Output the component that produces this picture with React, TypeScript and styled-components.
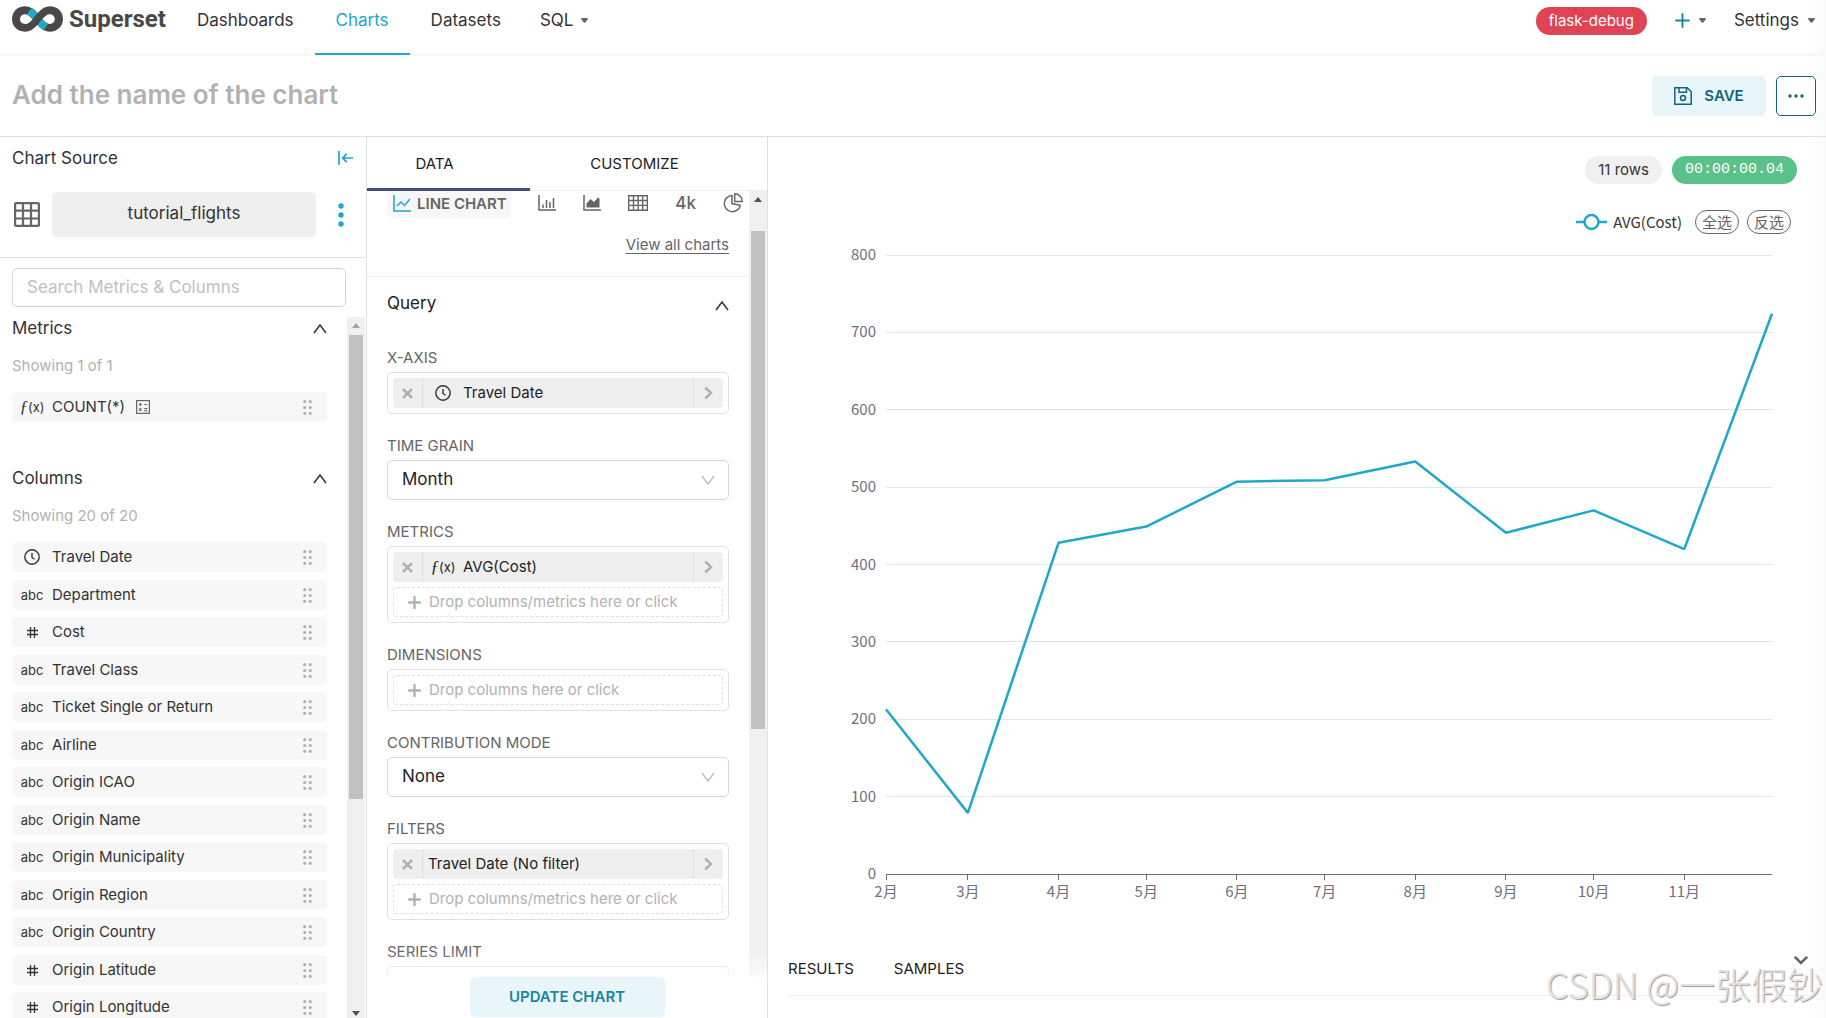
import React from 'react';
import styled, { createGlobalStyle } from 'styled-components';

const SANS = "Inter, 'Noto Sans CJK SC', 'Liberation Sans', sans-serif";
const CJK = "'Noto Sans CJK SC', 'Noto Sans', sans-serif";
const MONO = "'Liberation Mono', 'DejaVu Sans Mono', monospace";

const GlobalStyle = createGlobalStyle`
  *, *::before, *::after { box-sizing: border-box; }
  body { margin: 0; font-family: ${SANS}; font-size: 15px; line-height: 20px; color: #333; background: #fff; }
  button, input, select { font: inherit; color: inherit; margin: 0; }
  button { border: 0; padding: 0; background: none; cursor: pointer; }
  h1, h2, h3, p, ul { margin: 0; padding: 0; font-weight: 400; }
  ul { list-style: none; }
  a { color: inherit; text-decoration: none; }
  svg { display: block; flex: none; }
`;

const Page = styled.div`
  height: 100vh;
  display: flex;
  flex-direction: column;
  overflow: hidden;
  background: linear-gradient(to left, #f9f9f9, #fff 16px);
`;

/* ---------- top navigation ---------- */

const TopBar = styled.header`
  display: flex;
  justify-content: space-between;
  height: 56px;
  border-bottom: 2px solid #f7f7f7;
  font-size: 17px;
`;

const NavGroup = styled.nav`
  display: flex;
  align-items: flex-start;
`;

const Brand = styled.a`
  display: flex;
  align-items: center;
  gap: 6px;
  height: 38px;
  padding: 0 10px 0 12px;
  font-family: Roboto, ${SANS};
  font-size: 24px;
  font-weight: 700;
  color: #484848;
`;

const NavItem = styled.a<{ $active?: boolean; $menu?: boolean }>`
  display: flex;
  align-items: center;
  gap: 8px;
  height: 55px;
  padding: 0 21px 13px ${p => (p.$menu ? '18px' : '21px')};
  color: ${p => (p.$active ? '#20a7c9' : '#333')};
  border-bottom: 2px solid ${p => (p.$active ? '#20a7c9' : 'transparent')};
`;

const UserMenu = styled.div`
  display: flex;
  align-items: center;
  gap: 28px;
  height: 42px;
  padding-right: 11px;
`;

const MenuButton = styled.button`
  display: flex;
  align-items: center;
  gap: 9px;
  height: 28px;
  padding-bottom: 2px;
`;

const Pill = styled.span<{ $bg: string; $fg: string; $mono?: boolean }>`
  display: flex;
  align-items: center;
  height: 28px;
  padding: 0 13px;
  border-radius: 14px;
  background: ${p => p.$bg};
  color: ${p => p.$fg};
  font-family: ${p => (p.$mono ? MONO : SANS)};
  font-size: 15px;
`;

/* ---------- title row ---------- */

const TitleBar = styled.div`
  display: flex;
  align-items: center;
  gap: 10px;
  height: 81px;
  padding: 0 10px 0 12px;
  border-bottom: 1px solid #e0e0e0;
`;

const TitleInput = styled.input`
  flex: 1;
  min-width: 0;
  border: 0;
  padding: 0 0 2px;
  outline: 0;
  background: none;
  font-size: 26px;
  font-weight: 600;
  line-height: 32px;
  &::placeholder { color: #b2b2b2; opacity: 1; }
`;

const SoftButton = styled.button<{ $color: string; $wide?: boolean }>`
  display: flex;
  align-items: center;
  justify-content: center;
  gap: 12px;
  height: 40px;
  width: ${p => (p.$wide ? '195px' : '114px')};
  border-radius: 5px;
  background: #e9f6f9;
  color: ${p => p.$color};
  font-size: 15px;
  font-weight: 600;
`;

const MoreButton = styled.button`
  display: grid;
  place-items: center;
  width: 40px;
  height: 40px;
  border: 1px solid #156378;
  border-radius: 5px;
  color: #156378;
`;

/* ---------- workspace ---------- */

const Workspace = styled.div`
  flex: 1;
  min-height: 0;
  display: grid;
  grid-template-columns: 367px 401px minmax(0, 1fr);
`;

const SourcePanel = styled.aside`
  display: flex;
  flex-direction: column;
  min-height: 0;
  border-right: 1px solid #e0e0e0;
`;

const SourceHead = styled.div`
  display: flex;
  align-items: center;
  justify-content: space-between;
  padding: 9px 13px 0 12px;
  height: 32px;
`;

const SourceTitle = styled.h2`
  font-size: 17px;
`;

const DatasetRow = styled.div`
  display: flex;
  align-items: center;
  gap: 12px;
  margin-top: 23px;
  padding: 0 22px 20px 14px;
  border-bottom: 1px solid #e0e0e0;
`;

const DatasetButton = styled.button`
  width: 264px;
  height: 45px;
  margin-right: auto;
  padding-bottom: 3px;
  border-radius: 5px;
  background: #efefef;
  font-size: 17px;
`;

const SearchInput = styled.input`
  height: 39px;
  margin: 10px 20px 10px 12px;
  padding: 0 14px 2px;
  border: 1px solid #d3d3e0;
  border-radius: 5px;
  outline: 0;
  background: #fff;
  font-size: 17px;
  &::placeholder { color: #bfbfbf; opacity: 1; }
`;

const ScrollArea = styled.div`
  flex: 1;
  min-height: 0;
  display: flex;
`;

const SourceScroll = styled(ScrollArea)`
  padding-right: 1px;
`;

const SourceList = styled.div`
  flex: 1;
  min-width: 0;
  padding: 0 20px 0 12px;
  overflow: hidden;
`;

const Section = styled.section`
  margin-bottom: 45px;
`;

const SectionHead = styled.button`
  display: flex;
  align-items: center;
  justify-content: space-between;
  width: 100%;
  height: 22px;
  font-size: 17px;
`;

const Showing = styled.p`
  margin: 17px 0 16px;
  color: #b2b2b2;
`;

const FieldRow = styled.li`
  display: flex;
  align-items: center;
  height: 30px;
  padding: 0 15px 0 8px;
  border-radius: 5px;
  background: #f7f7f7;
  &:nth-child(odd) { margin-bottom: 8px; }
  &:nth-child(even) { margin-bottom: 7px; }
  &:last-child { margin-bottom: 0; }
`;

const TypeCell = styled.span`
  display: flex;
  justify-content: center;
  width: 24px;
  margin-right: 8px;
  font-size: 13px;
`;

const FieldName = styled.span`
  display: flex;
  flex: 1;
  align-items: center;
  gap: 11px;
`;

const Fx = styled.span`
  font-size: 13px;
  i { font-family: 'Liberation Serif', serif; font-size: 17px; }
`;

const Track = styled.div`
  display: flex;
  flex-direction: column;
  align-items: center;
  width: 18px;
  padding: 6px 2px 2px;
  background: #f0f0f0;
`;

const Thumb = styled.div<{ $share: number; $gap: number }>`
  width: 14px;
  height: ${p => p.$share}%;
  margin-top: ${p => p.$gap}px;
  margin-bottom: auto;
  background: #c1c1c1;
`;

/* ---------- control panel ---------- */

const ControlPanel = styled.section`
  display: flex;
  flex-direction: column;
  min-height: 0;
  border-right: 1px solid #e0e0e0;
`;

const Tabs = styled.div`
  display: flex;
  height: 54px;
  border-bottom: 1px solid #f0f0f0;
`;

const Tab = styled.button<{ $active?: boolean }>`
  flex: ${p => (p.$active ? '0 0 163px' : '1')};
  height: 54px;
  padding-top: 2px;
  padding-right: 28px;
  border-bottom: 3px solid ${p => (p.$active ? '#444e7c' : 'transparent')};
  color: #222;
`;

const Controls = styled.div`
  flex: 1;
  min-width: 0;
  overflow: hidden;
`;

const VizRow = styled.div`
  display: flex;
  align-items: flex-start;
  justify-content: space-between;
  padding: 0 6px 0 20px;
  color: #666;
`;

const VizChip = styled.button`
  display: flex;
  align-items: center;
  gap: 6px;
  height: 27px;
  width: 124px;
  padding: 0 6px 2px;
  border-radius: 0 0 5px 5px;
  background: #f7f7f7;
  font-size: 15px;
  font-weight: 600;
  white-space: nowrap;
`;

const VizButton = styled.button`
  display: grid;
  place-items: center;
  height: 24px;
  font-size: 17px;
  font-weight: 500;
`;

const ViewAll = styled.div`
  display: flex;
  justify-content: flex-end;
  padding: 17px 20px 21px;
  border-bottom: 1px solid #f0f0f0;
  color: #666;
  a { text-decoration: underline; text-underline-offset: 3px; }
`;

const QueryHead = styled.button`
  display: flex;
  align-items: center;
  justify-content: space-between;
  width: 100%;
  height: 56px;
  padding: 0 20px 4px;
  font-size: 17px;
  color: #222;
  > svg { margin-top: 5px; }
`;

const ControlList = styled.div`
  display: flex;
  flex-direction: column;
  gap: 23px;
  padding: 16px 20px 0;
`;

const Control = styled.div`
  display: flex;
  flex-direction: column;
  gap: 5px;
`;

const Caption = styled.label`
  line-height: 18px;
  color: #666;
`;

const SelectBox = styled.div`
  display: grid;
  align-items: center;
  > * { grid-area: 1 / 1; }
  > svg { justify-self: end; margin-right: 14px; pointer-events: none; }
`;

const Select = styled.select`
  appearance: none;
  width: 100%;
  height: 40px;
  padding: 0 14px 2px;
  border: 1px solid #d9d9d9;
  border-radius: 5px;
  outline: 0;
  background: #fff;
  font-size: 17px;
  color: #222;
`;

const DropBox = styled.div`
  display: flex;
  flex-direction: column;
  gap: 5px;
  padding: 5px;
  border: 1px solid #e0e0e0;
  border-radius: 5px;
`;

const Chip = styled.div`
  display: flex;
  align-items: stretch;
  height: 30px;
  border-radius: 4px;
  background: #efefef;
  color: #222;
`;

const ChipButton = styled.button<{ $side: 'left' | 'right' }>`
  display: grid;
  place-items: center;
  width: 30px;
  border-${p => (p.$side === 'left' ? 'right' : 'left')}: 1px solid #e0e0e0;
`;

const ChipLabel = styled.span<{ $icon?: boolean }>`
  display: flex;
  flex: 1;
  align-items: center;
  padding-left: ${p => (p.$icon ? '8px' : '5px')};
`;

const ChipIcon = styled.span`
  display: flex;
  justify-content: center;
  width: 24px;
  margin-right: 8px;
`;

const Ghost = styled.button`
  display: flex;
  align-items: center;
  gap: 8px;
  height: 30px;
  padding: 0 14px;
  border: 1px dashed #e0e0e0;
  border-radius: 4px;
  color: #b2b2b2;
`;

const UpdateBar = styled.div`
  display: flex;
  justify-content: center;
  align-items: flex-start;
  height: 67px;
  margin-top: -26px;
  padding-top: 26px;
  background: linear-gradient(rgba(255, 255, 255, 0), #fff 34px);
  z-index: 1;
`;

/* ---------- chart panel ---------- */

const ChartPanel = styled.main`
  display: flex;
  flex-direction: column;
  min-width: 0;
  overflow: hidden;
`;

const StatRow = styled.div`
  display: flex;
  justify-content: flex-end;
  gap: 10px;
  padding: 19px 29px 26px;
`;

const Legend = styled.div`
  display: flex;
  align-items: center;
  justify-content: flex-end;
  gap: 8px;
  height: 24px;
  padding-right: 35px;
  font-family: ${CJK};
  color: #333;
`;

const LegendItem = styled.button`
  display: flex;
  align-items: center;
  gap: 6px;
  margin-right: 5px;
`;

const LegendButton = styled.button`
  height: 24px;
  padding: 0 6px;
  border: 1px solid #666;
  border-radius: 12px;
  line-height: 20px;
  color: #666;
`;

const ChartSvg = styled.svg`
  width: 100%;
  height: auto;
  text { font-family: ${CJK}; font-size: 15px; fill: #6e7079; }
`;

const ResultsBar = styled.div`
  display: flex;
  align-items: center;
  gap: 40px;
  margin: 30px 18px 0 20px;
  height: 52px;
  padding-bottom: 2px;
  border-bottom: 1px solid #f0f0f0;
  color: #222;
  > :last-child { align-self: flex-start; margin: 12px 0 0 auto; }
`;

const Watermark = styled.span`
  position: absolute;
  right: 3px;
  bottom: 12px;
  font-family: ${CJK};
  font-size: 36px;
  font-weight: 300;
  line-height: 46px;
  color: #e2e2e2;
  text-shadow: 1px 1px 1px #999;
  pointer-events: none;
`;

/* ---------- icons ---------- */

const Caret = ({ color = '#666' }: { color?: string }) => (
  <svg width="7" height="5" viewBox="0 0 7 5" fill={color}>
    <path d="M1 0h5c.8 0 1.200.8.700 1.400L4.200 4.400a1 1 0 0 1-1.400 0L.3 1.400C-.2.8.2 0 1 0z" />
  </svg>
);

const ThinUp = () => (
  <svg width="14" height="11" viewBox="0 0 14 11" fill="none" stroke="#333" strokeWidth="1.5">
    <path d="M1 10L7 2l6 8" />
  </svg>
);

const ThinDown = () => (
  <svg width="14" height="11" viewBox="0 0 14 11" fill="none" stroke="#bfbfbf" strokeWidth="1.4">
    <path d="M1 1l6 8 6-8" />
  </svg>
);

const Logo = () => (
  <svg width="51" height="26" viewBox="17.700 15.200 75.500 37.500">
    <path
      fill="#484848"
      d="M73.790 15.230C67.320 15.230 61.360 18.870 55.600 25.230 49.940 18.770 43.880 15.230 37.110 15.230 25.900 15.230 17.720 23.230 17.720 34s8.180 18.670 19.390 18.670c6.890 0 12.230-3.230 18.190-9.670 5.760 6.460 11.620 9.690 18.490 9.690C85 52.670 93.180 44.800 93.180 34S85 15.230 73.790 15.230zM37.190 41.370c-4.750 0-7.580-3.130-7.580-7.270s2.830-7.360 7.580-7.360c4 0 7.270 3.220 10.810 7.560-3.340 4.040-6.870 7.070-10.810 7.070zm36.260 0c-3.940 0-7.270-3.130-10.810-7.270 3.640-4.340 6.770-7.360 10.810-7.360 4.750 0 7.550 3.260 7.550 7.360s-2.800 7.270-7.550 7.270z"
    />
    <path fill="#20a7c9" d="M55.600 25.230c-2.700-3.200-5.600-5.700-9-7.500l-7.200 9.400c3.100 1.100 5.700 3.900 8.600 7.200z" />
    <path fill="#20a7c9" d="M55.300 43c2.700 3.200 5.600 5.800 8.900 7.600l7.200-9.500c-3.200-.9-5.900-3.700-8.760-7z" />
  </svg>
);

const Save = () => (
  <svg width="18" height="18" viewBox="0 0 18 18" fill="none" stroke="#156378" strokeWidth="1.500">
    <path d="M.8.8h12.400l4 4v12.400H.8z" />
    <path d="M5 1v4.200h7.500V1" />
    <circle cx="9" cy="11" r="2.500" />
  </svg>
);

const Grid = () => (
  <svg width="26" height="25" viewBox="0 0 26 25" fill="none" stroke="#666" strokeWidth="2.200">
    <rect x="1.100" y="1.100" width="23.800" height="22.800" rx="1" />
    <path d="M9 0v25M17 0v25M0 8.600h26M0 16.500h26" />
  </svg>
);

const Dots = () => (
  <svg width="6" height="24" viewBox="0 0 6 24" fill="#20a7c9">
    <circle cx="3" cy="3" r="2.700" />
    <circle cx="3" cy="12" r="2.700" />
    <circle cx="3" cy="21" r="2.700" />
  </svg>
);

const Collapse = () => (
  <svg width="15" height="14" viewBox="0 0 15 14" fill="none" stroke="#20a7c9" strokeWidth="1.700">
    <path d="M1 0v14M4.500 7H15M8.800 2.800L4.600 7l4.200 4.200" />
  </svg>
);

const Grip = () => (
  <svg width="9" height="15" viewBox="0 0 9 15" fill="#b2b2b2">
    {[1.7, 7.3].map(x => [1.7, 7.5, 13.3].map(y => <circle key={`${x}-${y}`} cx={x} cy={y} r="1.600" />))}
  </svg>
);

const Clock = () => (
  <svg width="16" height="16" viewBox="0 0 16 16" fill="none" stroke="#333" strokeWidth="1.400">
    <circle cx="8" cy="8" r="7.200" />
    <path d="M8 4v4.500l2.500 1.800" />
  </svg>
);

const Hash = () => (
  <svg width="11" height="11" viewBox="0 0 11 11" fill="none" stroke="#333" strokeWidth="1.300">
    <path d="M3.500 0v11M7.500 0v11M0 3.500h11M0 7.500h11" />
  </svg>
);

const Calc = () => (
  <svg width="14" height="14" viewBox="0 0 14 14" fill="none" stroke="#666" strokeWidth="1.200">
    <rect x=".6" y=".6" width="12.800" height="12.800" />
    <path d="M2.800 4.500h3M4.300 3v3M8.300 4.500h3M3 8.300l2.500 2.500M5.500 8.300L3 10.800M8.300 8.600h3M8.300 10.800h3" />
  </svg>
);

const LineViz = () => (
  <svg width="18" height="17" viewBox="0 0 18 17" fill="none" stroke="#20a7c9" strokeWidth="1.500">
    <path d="M1 0v16h17M4 11l4-4 3.500 3.500L17 4" />
  </svg>
);

const BarViz = () => (
  <svg width="18" height="16" viewBox="0 0 18 16" fill="none" stroke="#666" strokeWidth="1.500">
    <path d="M1 0v15h17M5 9.500V13M8.500 5v8M12 7v6M15.500 3v10" />
  </svg>
);

const AreaViz = () => (
  <svg width="18" height="16" viewBox="0 0 18 16" fill="none" stroke="#666" strokeWidth="1.500">
    <path d="M1 0v15h17" />
    <path d="M3.500 12.500V8.500L7.500 4l3.500 3 4-4.500 1.500 1v9z" fill="#666" stroke="none" />
  </svg>
);

const TableViz = () => (
  <svg width="20" height="16" viewBox="0 0 20 16" fill="none" stroke="#666" strokeWidth="1.400">
    <path d="M.7.7h18.600v14.600H.7zM.7 5.500h18.600M.7 10.400h18.600M5.500.7v14.600M10.100.7v14.600M14.700.7v14.600" />
  </svg>
);

const PieViz = () => (
  <svg width="20" height="20" viewBox="0 0 20 20" fill="none" stroke="#666" strokeWidth="1.500">
    <path d="M9 2.500a8.100 8.100 0 1 0 8.300 9.800L9 10.600z" />
    <path d="M11.700.8v7.600h7.500a7.500 7.500 0 0 0-7.500-7.600z" />
  </svg>
);

const Close = () => (
  <svg width="11" height="11" viewBox="0 0 11 11" stroke="#b2b2b2" strokeWidth="2.500">
    <path d="M1 1l9 9M10 1l-9 9" />
  </svg>
);

const Next = () => (
  <svg width="9" height="14" viewBox="0 0 9 14" fill="none" stroke="#b2b2b2" strokeWidth="2.500">
    <path d="M1.200 1.500L7 7l-5.800 5.500" />
  </svg>
);

const Plus = ({ color, size, s }: { color: string; size: number; s: number }) => (
  <svg width={size} height={size} viewBox="0 0 14 14" stroke={color} strokeWidth={s} strokeLinecap="round">
    <path d="M7 1v12M1 7h12" />
  </svg>
);

const Arrow = ({ up, color }: { up?: boolean; color: string }) => (
  <svg width="8" height="5" viewBox="0 0 8 5" fill={color}>
    <path d={up ? 'M0 5l4-5 4 5z' : 'M0 0h8L4 5z'} />
  </svg>
);

const FnIcon = () => (
  <Fx>
    <i>ƒ</i>(x)
  </Fx>
);

/* ---------- data ---------- */

type Kind = 'time' | 'text' | 'number';

const COLUMNS: [Kind, string][] = [
  ['time', 'Travel Date'],
  ['text', 'Department'],
  ['number', 'Cost'],
  ['text', 'Travel Class'],
  ['text', 'Ticket Single or Return'],
  ['text', 'Airline'],
  ['text', 'Origin ICAO'],
  ['text', 'Origin Name'],
  ['text', 'Origin Municipality'],
  ['text', 'Origin Region'],
  ['text', 'Origin Country'],
  ['number', 'Origin Latitude'],
  ['number', 'Origin Longitude'],
];

const SERIES = [
  { label: '2月', day: 0, cost: 213 },
  { label: '3月', day: 28, cost: 79 },
  { label: '4月', day: 59, cost: 428 },
  { label: '5月', day: 89, cost: 449 },
  { label: '6月', day: 120, cost: 507 },
  { label: '7月', day: 150, cost: 509 },
  { label: '8月', day: 181, cost: 533 },
  { label: '9月', day: 212, cost: 441 },
  { label: '10月', day: 242, cost: 470 },
  { label: '11月', day: 273, cost: 420 },
  { label: '', day: 303, cost: 724 },
];

const PLOT = { left: 118, right: 1004, top: 21, bottom: 640 };
const px = (day: number) => PLOT.left + (day / 303) * (PLOT.right - PLOT.left);
const py = (v: number) => PLOT.bottom - (v / 800) * (PLOT.bottom - PLOT.top);

const kindIcon = { time: <Clock />, text: 'abc', number: <Hash /> };

const LineChart = () => (
  <ChartSvg viewBox="0 0 1058 680" role="img" aria-label="AVG(Cost)">
    {[0, 100, 200, 300, 400, 500, 600, 700, 800].map(v => (
      <g key={v}>
        {v > 0 && <path d={`M${PLOT.left} ${Math.floor(py(v)) + 0.5}H${PLOT.right}`} stroke="#e0e6f1" />}
        <text x={PLOT.left - 10} y={py(v) + 5} textAnchor="end">
          {v}
        </text>
      </g>
    ))}
    <path d={`M${PLOT.left} ${PLOT.bottom + 0.5}H${PLOT.right}`} stroke="#6e7079" />
    {SERIES.filter(p => p.label).map(p => (
      <g key={p.label}>
        <path d={`M${Math.floor(px(p.day)) + 0.5} ${PLOT.bottom}v6`} stroke="#6e7079" />
        <text x={px(p.day)} y={PLOT.bottom + 23} textAnchor="middle">
          {p.label}
        </text>
      </g>
    ))}
    <polyline
      points={SERIES.map(p => `${px(p.day)},${py(p.cost)}`).join(' ')}
      fill="none"
      stroke="#1fa8c9"
      strokeWidth="2.500"
      strokeLinejoin="bevel"
    />
  </ChartSvg>
);

const ChipItem = ({ label, icon }: { label: string; icon?: React.ReactNode }) => (
  <Chip>
    <ChipButton $side="left" aria-label={`Remove ${label}`}>
      <Close />
    </ChipButton>
    <ChipLabel $icon={!!icon}>
      {icon && <ChipIcon>{icon}</ChipIcon>}
      {label}
    </ChipLabel>
    <ChipButton $side="right" aria-label={`Edit ${label}`}>
      <Next />
    </ChipButton>
  </Chip>
);

const DropTarget = ({ id, children }: { id?: string; children: string }) => (
  <Ghost id={id}>
    <Plus color="#b2b2b2" size={13} s={2.5} />
    {children}
  </Ghost>
);

const SelectControl = ({ id, label, value }: { id: string; label: string; value: string }) => (
  <Control>
    <Caption htmlFor={id}>{label}</Caption>
    <SelectBox>
      <Select id={id} defaultValue={value}>
        <option>{value}</option>
      </Select>
      <ThinDown />
    </SelectBox>
  </Control>
);

export default function App() {
  return (
    <Page>
      <GlobalStyle />
      <TopBar>
        <NavGroup>
          <Brand href="#">
            <Logo />
            Superset
          </Brand>
          <NavItem href="#">Dashboards</NavItem>
          <NavItem href="#" $active>
            Charts
          </NavItem>
          <NavItem href="#">Datasets</NavItem>
          <NavItem href="#" $menu>
            SQL <Caret />
          </NavItem>
        </NavGroup>
        <UserMenu>
          <Pill $bg="#e04355" $fg="#fff">
            flask-debug
          </Pill>
          <MenuButton aria-label="New">
            <Plus color="#1985a0" size={15} s={1.8} />
            <Caret />
          </MenuButton>
          <MenuButton>
            Settings <Caret />
          </MenuButton>
        </UserMenu>
      </TopBar>

      <TitleBar>
        <TitleInput aria-label="Chart name" placeholder="Add the name of the chart" />
        <SoftButton $color="#156378">
          <Save />
          SAVE
        </SoftButton>
        <MoreButton aria-label="More actions">
          <svg width="16" height="4" viewBox="0 0 16 4" fill="currentColor">
            <circle cx="2" cy="2" r="1.700" />
            <circle cx="8" cy="2" r="1.700" />
            <circle cx="14" cy="2" r="1.700" />
          </svg>
        </MoreButton>
      </TitleBar>

      <Workspace>
        <SourcePanel>
          <SourceHead>
            <SourceTitle>Chart Source</SourceTitle>
            <button aria-label="Collapse panel">
              <Collapse />
            </button>
          </SourceHead>
          <DatasetRow>
            <Grid />
            <DatasetButton>tutorial_flights</DatasetButton>
            <button aria-label="Dataset actions">
              <Dots />
            </button>
          </DatasetRow>
          <SearchInput aria-label="Search Metrics & Columns" placeholder="Search Metrics & Columns" />
          <SourceScroll>
            <SourceList>
              <Section>
                <SectionHead>
                  Metrics
                  <ThinUp />
                </SectionHead>
                <Showing>Showing 1 of 1</Showing>
                <ul>
                  <FieldRow>
                    <TypeCell>
                      <FnIcon />
                    </TypeCell>
                    <FieldName>
                      COUNT(*)
                      <Calc />
                    </FieldName>
                    <Grip />
                  </FieldRow>
                </ul>
              </Section>
              <Section>
                <SectionHead>
                  Columns
                  <ThinUp />
                </SectionHead>
                <Showing>Showing 20 of 20</Showing>
                <ul>
                  {COLUMNS.map(([kind, name]) => (
                    <FieldRow key={name}>
                      <TypeCell>{kindIcon[kind]}</TypeCell>
                      <FieldName>{name}</FieldName>
                      <Grip />
                    </FieldRow>
                  ))}
                </ul>
              </Section>
            </SourceList>
            <Track>
              <Arrow up color="#a3a3a3" />
              <Thumb $share={67} $gap={7} />
              <Arrow color="#505050" />
            </Track>
          </SourceScroll>
        </SourcePanel>

        <ControlPanel>
          <Tabs role="tablist">
            <Tab role="tab" aria-selected $active>
              DATA
            </Tab>
            <Tab role="tab" aria-selected={false}>
              CUSTOMIZE
            </Tab>
          </Tabs>
          <ScrollArea>
            <Controls>
              <VizRow>
                <VizChip>
                  <LineViz />
                  LINE CHART
                </VizChip>
                <VizButton aria-label="Bar chart">
                  <BarViz />
                </VizButton>
                <VizButton aria-label="Area chart">
                  <AreaViz />
                </VizButton>
                <VizButton aria-label="Table">
                  <TableViz />
                </VizButton>
                <VizButton>4k</VizButton>
                <VizButton aria-label="Pie chart">
                  <PieViz />
                </VizButton>
              </VizRow>
              <ViewAll>
                <a href="#">View all charts</a>
              </ViewAll>
              <QueryHead>
                Query
                <ThinUp />
              </QueryHead>
              <ControlList>
                <Control>
                  <Caption as="span">X-AXIS</Caption>
                  <DropBox>
                    <ChipItem label="Travel Date" icon={<Clock />} />
                  </DropBox>
                </Control>
                <SelectControl id="grain" label="TIME GRAIN" value="Month" />
                <Control>
                  <Caption htmlFor="metrics">METRICS</Caption>
                  <DropBox>
                    <ChipItem label="AVG(Cost)" icon={<FnIcon />} />
                    <DropTarget id="metrics">Drop columns/metrics here or click</DropTarget>
                  </DropBox>
                </Control>
                <Control>
                  <Caption htmlFor="dimensions">DIMENSIONS</Caption>
                  <DropBox>
                    <DropTarget id="dimensions">Drop columns here or click</DropTarget>
                  </DropBox>
                </Control>
                <SelectControl id="contribution" label="CONTRIBUTION MODE" value="None" />
                <Control>
                  <Caption htmlFor="filters">FILTERS</Caption>
                  <DropBox>
                    <ChipItem label="Travel Date (No filter)" />
                    <DropTarget id="filters">Drop columns/metrics here or click</DropTarget>
                  </DropBox>
                </Control>
                <SelectControl id="limit" label="SERIES LIMIT" value="None" />
              </ControlList>
            </Controls>
            <Track>
              <Arrow up color="#505050" />
              <Thumb $share={64} $gap={29} />
            </Track>
          </ScrollArea>
          <UpdateBar>
            <SoftButton $color="#1985a0" $wide>
              UPDATE CHART
            </SoftButton>
          </UpdateBar>
        </ControlPanel>

        <ChartPanel>
          <StatRow>
            <Pill $bg="#f0f0f0" $fg="#333">
              11 rows
            </Pill>
            <Pill $bg="#5ac189" $fg="#fff" $mono>
              00:00:00.04
            </Pill>
          </StatRow>
          <Legend>
            <LegendItem>
              <svg width="31" height="18" viewBox="0 0 31 18" stroke="#1fa8c9" strokeWidth="2.500" fill="#fff">
                <path d="M0 9h31" />
                <circle cx="15.500" cy="9" r="7" />
              </svg>
              AVG(Cost)
            </LegendItem>
            <LegendButton>全选</LegendButton>
            <LegendButton>反选</LegendButton>
          </Legend>
          <LineChart />
          <ResultsBar>
            <button>RESULTS</button>
            <button>SAMPLES</button>
            <button aria-label="Expand results">
              <svg width="14" height="9" viewBox="0 0 14 9" fill="none" stroke="#666" strokeWidth="2.500" strokeLinecap="round">
                <path d="M1.500 1.500L7 7l5.500-5.500" />
              </svg>
            </button>
          </ResultsBar>
        </ChartPanel>
      </Workspace>
      <Watermark>CSDN @一张假钞</Watermark>
    </Page>
  );
}
